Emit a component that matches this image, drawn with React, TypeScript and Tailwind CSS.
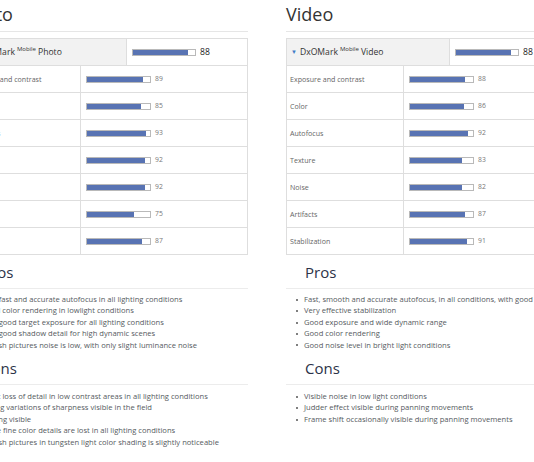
type Row = { label: string; score: number }

type Section = {
  title: string
  total: number
  rows: Row[]
  pros: string[]
  cons: string[]
}

const SECTIONS: Section[] = [
  {
    title: 'Photo',
    total: 88,
    rows: [
      { label: 'Exposure and contrast', score: 89 },
      { label: 'Color', score: 85 },
      { label: 'Autofocus', score: 93 },
      { label: 'Texture', score: 92 },
      { label: 'Noise', score: 92 },
      { label: 'Artifacts', score: 75 },
      { label: 'Flash', score: 87 },
    ],
    pros: [
      'Very fast and accurate autofocus in all lighting conditions',
      'Good color rendering in lowlight conditions',
      'Very good target exposure for all lighting conditions',
      'Very good shadow detail for high dynamic scenes',
      'In flash pictures noise is low, with only slight luminance noise',
    ],
    cons: [
      'Slight loss of detail in low contrast areas in all lighting conditions',
      'Strong variations of sharpness visible in the field',
      'Ringing visible',
      'Some fine color details are lost in all lighting conditions',
      'In flash pictures in tungsten light color shading is slightly noticeable',
    ],
  },
  {
    title: 'Video',
    total: 88,
    rows: [
      { label: 'Exposure and contrast', score: 88 },
      { label: 'Color', score: 86 },
      { label: 'Autofocus', score: 92 },
      { label: 'Texture', score: 83 },
      { label: 'Noise', score: 82 },
      { label: 'Artifacts', score: 87 },
      { label: 'Stabilization', score: 91 },
    ],
    pros: [
      'Fast, smooth and accurate autofocus, in all conditions, with good tracking',
      'Very effective stabilization',
      'Good exposure and wide dynamic range',
      'Good color rendering',
      'Good noise level in bright light conditions',
    ],
    cons: [
      'Visible noise in low light conditions',
      'Judder effect visible during panning movements',
      'Frame shift occasionally visible during panning movements',
    ],
  },
]

function Bar({ value, width }: { value: number; width: number }) {
  return (
    <div className="h-[7px] border border-[#b9b9b9] bg-white shrink-0" style={{ width }}>
      <div className="h-full bg-[#5873b3]" style={{ width: `${value}%` }} />
    </div>
  )
}

function List({ items }: { items: string[] }) {
  return (
    <ul className="pl-[10px] text-[7.6px] leading-[11.4px] text-[#555a60]">
      {items.map(t => (
        <li key={t} className="flex items-center whitespace-nowrap">
          <span className="w-[2px] h-[2px] rounded-full bg-[#555] mr-[6px] shrink-0" />
          {t}
        </li>
      ))}
    </ul>
  )
}

function Column({ s }: { s: Section }) {
  return (
    <section className="w-[285px] shrink-0">
      <div className="h-[32px] border-b border-[#e6e6e6] pt-[2px]">
        <h2 className="text-[18px] leading-[24px] text-[#333]">{s.title}</h2>
      </div>

      {/* score table */}
      <div className="mt-[6px] border border-[#dedede]">
        <div className="flex h-[26px]">
          <div className="w-[163px] bg-[#f2f2f2] border-r border-[#dedede] flex items-center pl-[4px] text-[8.6px] text-[#333]">
            <span className="text-[#3f7cc6] text-[6px] mr-[3px]">▼</span>
            DxOMark <sup className="text-[6px] ml-[2px] mr-[2px] -top-[3px]">Mobile</sup> {s.title}
          </div>
          <div className="flex-1 flex items-center pl-[5px] gap-[4px] text-[8.6px] text-[#222]">
            <Bar value={s.total} width={64} />
            {s.total}
          </div>
        </div>
        {s.rows.map(r => (
          <div key={r.label} className="flex h-[27px] border-t border-[#dedede]">
            <div className="w-[117px] border-r border-[#dedede] flex items-center pl-[3px] text-[7.1px] text-[#666] whitespace-nowrap">
              {r.label}
            </div>
            <div className="flex-1 flex items-center pl-[5px] gap-[4px] text-[6.8px] text-[#777]">
              <Bar value={r.score} width={65} />
              {r.score}
            </div>
          </div>
        ))}
      </div>

      {/* pros */}
      <div className="mt-[7px] border-b border-[#ececec] pb-[6px] pl-[19px]">
        <h3 className="text-[15px] leading-[20px] text-[#2c3348]">Pros</h3>
      </div>
      <div className="mt-[5px]">
        <List items={s.pros} />
      </div>

      {/* cons */}
      <div className="mt-[7px] border-b border-[#ececec] pb-[6px] pl-[19px]">
        <h3 className="text-[15px] leading-[20px] text-[#2c3348]">Cons</h3>
      </div>
      <div className="mt-[6px]">
        <List items={s.cons} />
      </div>
    </section>
  )
}

export default function App() {
  return (
    <div
      className="w-[534px] h-[462px] overflow-hidden bg-white"
      style={{ fontFamily: '"Open Sans", "Noto Sans", sans-serif' }}
    >
      <div className="flex gap-[38px] ml-[-37px]">
        {SECTIONS.map(s => (
          <Column key={s.title} s={s} />
        ))}
      </div>
    </div>
  )
}
